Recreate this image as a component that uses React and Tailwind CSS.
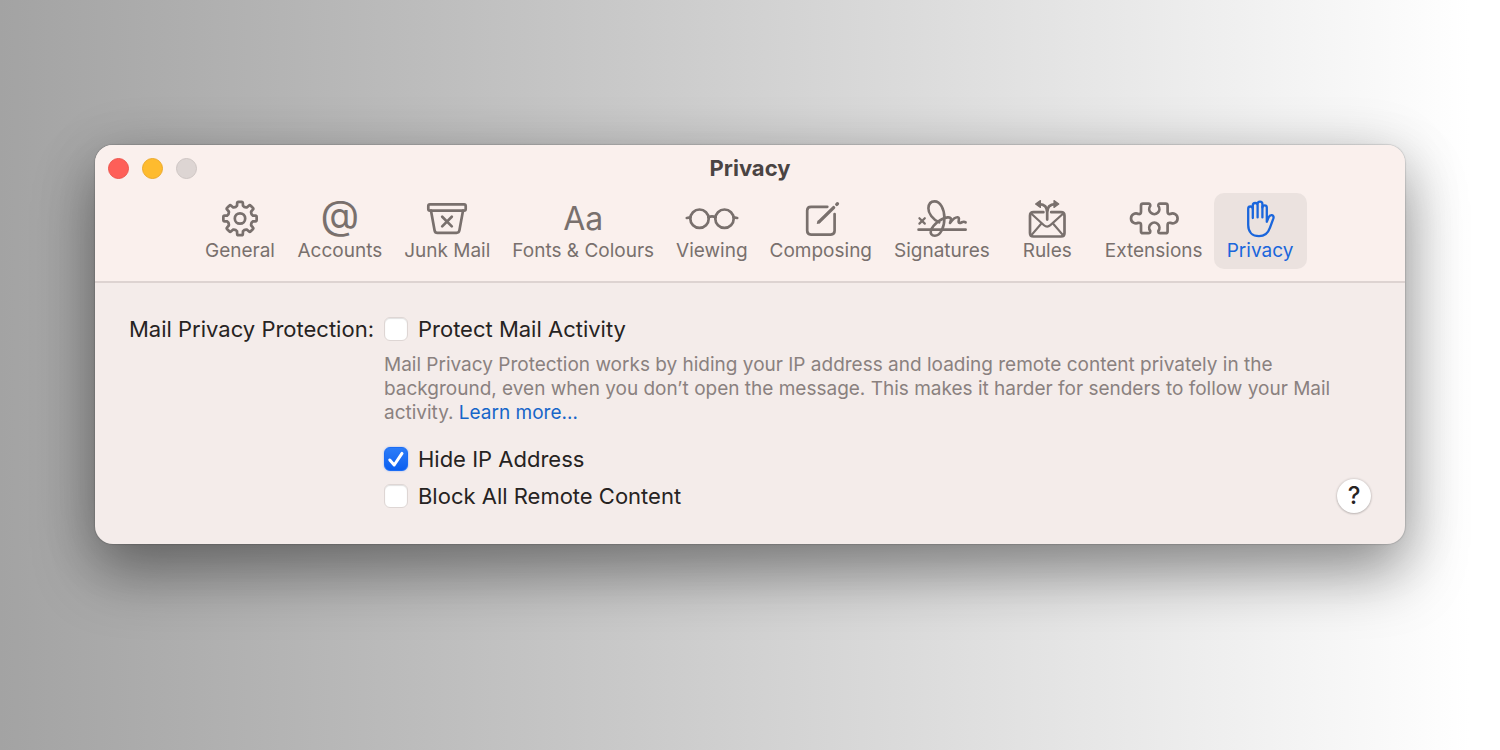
import React, { useState } from 'react';
import { clsx } from 'clsx';

// Outline of a cog with eight teeth, centred on (cx, cy)
const gearPath = (cx, cy) => {
    const point = (radius, degrees) => {
        const angle = (degrees * Math.PI) / 180;
        return `${(cx + radius * Math.cos(angle)).toFixed(2)} ${(cy + radius * Math.sin(angle)).toFixed(2)}`;
    };
    const teeth = [0, 45, 90, 135, 180, 225, 270, 315].map((a, i) => (
        `${i === 0 ? 'M' : 'L'}${point(13.2, a - 13)} L${point(15.6, a - 10.5)} Q${point(16.9, a - 9.5)} ${point(16.7, a - 5)} ` +
        `L${point(16.7, a + 5)} Q${point(16.9, a + 9.5)} ${point(15.6, a + 10.5)} L${point(13.2, a + 13)} Q${point(11.6, a + 22.5)} ${point(13.2, a + 32)}`
    ));
    return `${teeth.join(' ')} Z`;
};

const Icon = ({ children }) => (
    <svg
        viewBox="0 0 56 40"
        className="h-10 w-14"
        fill="none"
        stroke="currentColor"
        strokeWidth="2.7"
        strokeLinecap="round"
        strokeLinejoin="round"
        aria-hidden="true"
    >
        {children}
    </svg>
);

const GeneralIcon = () => (
    <Icon>
        <path d={gearPath(28, 19.5)} />
        <circle cx="28" cy="19.5" r="5.2" />
    </Icon>
);

const JunkIcon = () => (
    <Icon>
        <rect x="9.3" y="5.3" width="37.4" height="6.4" rx="1.6" />
        <path d="M12 11.7 L15.6 31.4 Q16 33.8 18.5 33.8 H37.5 Q40 33.8 40.4 31.4 L44 11.7" />
        <path d="M23.2 17.8 L32.8 27.4 M32.8 17.8 L23.2 27.4" />
    </Icon>
);

const ViewingIcon = () => (
    <Icon>
        <circle cx="15.5" cy="19.7" r="9.2" />
        <circle cx="40.5" cy="19.7" r="9.2" />
        <path d="M24.3 18.4 Q28 16.4 31.7 18.4 M2.8 19 L6.3 18.4 M53.2 19 L49.7 18.4" />
    </Icon>
);

const ComposingIcon = () => (
    <Icon>
        <path d="M34.3 7.8 H18 Q14.2 7.8 14.2 11.6 V31.8 Q14.2 35.6 18 35.6 H37.8 Q41.6 35.6 41.6 31.8 V15" />
        <path d="M26.3 22.6 L40.6 8.6" strokeWidth="3.4" />
        <path d="M24.6 24.4 L27 23.6 L25.5 22 Z" strokeWidth="1" fill="currentColor" />
        <path d="M43.8 5.4 L44.4 4.8" strokeWidth="3.4" />
    </Icon>
);

const SignaturesIcon = () => (
    <Icon>
        <path d="M4.6 30.7 H51.6" />
        <path d="M5.4 19.2 L10.8 24.6 M10.8 19.2 L5.4 24.6" strokeWidth="2.2" />
        <path d="M25.2 23.4 C18.5 20 14.2 14.2 14.4 9.4 C14.6 4.6 17.4 2.4 20.6 2.4 C26.4 2.4 30.4 10 30.4 19 C30.4 28.6 26.4 36.8 20.8 36.8 C17.6 36.8 16 34.6 17 31.4 C18.8 26 27 19 33.8 18.4 C38 18.2 37.2 20.6 36 24 C38.4 20.6 41.6 18 43.8 18.2 C46.6 18.6 43 23.8 45.6 24 C48 24 49 21.4 51.6 23.4" strokeWidth="2.6" />
    </Icon>
);

const RulesIcon = () => (
    <Icon>
        <path d="M24.4 13.2 H14.5 Q11 13.2 11 16.7 V34 Q11 37.5 14.5 37.5 H42 Q45.5 37.5 45.5 34 V16.7 Q45.5 13.2 42 13.2 H32.2" />
        <path d="M12.4 14.8 L25 26.2 Q28.2 29 31.4 26.2 L44 14.8" strokeWidth="2.2" />
        <path d="M12.2 36.4 L22 25 M44.2 36.4 L34.4 25" strokeWidth="2.2" />
        <path d="M28.2 20.6 V13.4 Q28.2 5.4 20.2 5.2 M28.2 13.4 Q28.2 5.4 36.2 5.2" />
        <path d="M16.6 5 L21.4 1.6 V8.4 Z M39.8 5 L35 1.6 V8.4 Z" strokeWidth="1.2" fill="currentColor" />
    </Icon>
);

const ExtensionsIcon = () => (
    <Icon>
        <path d="M17 4.6 H22.4 Q24.6 4.6 24.2 7 A5.1 5.1 0 1 0 32.4 7 Q32 4.6 34.2 4.6 H39.6 Q41.6 4.6 41.6 6.6 V12.8 Q41.6 15.4 44.2 15 A5 5 0 1 1 44.2 23.8 Q41.6 23.4 41.6 26 V32.2 Q41.6 34.2 39.6 34.2 H34.2 Q32 34.2 32.4 31.8 A5.1 5.1 0 1 0 24.2 31.8 Q24.6 34.2 22.4 34.2 H17 Q15 34.2 15 32.2 V26 Q15 23.4 12.4 23.8 A5 5 0 1 1 12.4 15 Q15 15.4 15 12.8 V6.6 Q15 4.6 17 4.6 Z" />
    </Icon>
);

const PrivacyIcon = () => (
    <Icon>
        <g strokeWidth="2.3">
            <path d="M20.8 19 V9.8 A2.2 2.2 0 0 0 16.2 9.8 V26 C16.2 33 20.4 37.2 27 37.2 C33 37.2 36.2 33.8 38 28.6 L41.4 19.4 C42 17.4 41 16.2 39.6 16.2 C38.2 16.2 37.2 17 36.6 18.4 L34.8 22.8 V8.6 A2.2 2.2 0 0 0 30.4 8.6" />
            <path d="M20.8 9.8 V6.4 A2.4 2.4 0 0 1 25.6 6.4 V18.4 M25.6 6.4 V5 A2.4 2.4 0 0 1 30.4 5 V18.4" />
        </g>
    </Icon>
);

const tabs = [
    { name: 'General', icon: <GeneralIcon /> },
    { name: 'Accounts', icon: <span className="h-10 text-[40px] leading-8" aria-hidden="true">@</span> },
    { name: 'Junk Mail', icon: <JunkIcon /> },
    { name: 'Fonts & Colours', icon: <span className="h-10 text-[32px] leading-10" aria-hidden="true">Aa</span> },
    { name: 'Viewing', icon: <ViewingIcon /> },
    { name: 'Composing', icon: <ComposingIcon /> },
    { name: 'Signatures', icon: <SignaturesIcon /> },
    { name: 'Rules', icon: <RulesIcon /> },
    { name: 'Extensions', icon: <ExtensionsIcon /> },
    { name: 'Privacy', icon: <PrivacyIcon /> },
];

const CheckRow = ({ id, label, checked, onChange }) => (
    <div className="flex h-6 items-center gap-[10px]">
        <span className="grid size-6 shrink-0">
            <input
                id={id}
                type="checkbox"
                checked={checked}
                onChange={onChange}
                className="col-start-1 row-start-1 size-6 appearance-none rounded-[6px] border border-[#ded6d4] bg-white shadow-[inset_0_1px_1px_rgba(0,0,0,0.12)] checked:border-[#1a6cf5] checked:bg-linear-to-b checked:from-[#2b7cf8] checked:to-[#0a5ff0] checked:shadow-[0_0_2px_rgba(40,120,255,0.5)]"
            />
            {checked && (
                <svg viewBox="0 0 24 24" className="pointer-events-none col-start-1 row-start-1 size-6" fill="none" stroke="#fff" strokeWidth="3" strokeLinecap="round" strokeLinejoin="round" aria-hidden="true">
                    <path d="M5.8 13 L10.2 18 L18 6.4" />
                </svg>
            )}
        </span>
        <label htmlFor={id}>{label}</label>
    </div>
);

const App = () => {
    const [activeTab, setActiveTab] = useState('Privacy');
    const [settings, setSettings] = useState({ protect: false, hideIp: true, blockRemote: false });

    const toggle = (key) => setSettings({ ...settings, [key]: !settings[key] });

    return (
        <div className="min-h-screen bg-linear-to-r from-[#a3a3a3] to-white to-98% px-[95px] pt-[145px] pb-16 font-['Inter',sans-serif]">
            <main className="overflow-hidden rounded-[18px] bg-[#f4ecea] shadow-[0_0_1px_1px_rgba(0,0,0,0.12),0_30px_60px_rgba(0,0,0,0.36),0_6px_60px_rgba(0,0,0,0.14)]">
                <header className="border-b-2 border-[#ddd3d1] bg-[#faf0ed] pb-3">
                    <div className="grid h-[46px] grid-cols-[1fr_auto_1fr] items-center px-[13px]">
                        <div className="flex gap-[13px]">
                            <button type="button" aria-label="Close" className="size-[21px] rounded-full border border-[#ec554d] bg-[#fe5f58]" />
                            <button type="button" aria-label="Minimise" className="size-[21px] rounded-full border border-[#eba92b] bg-[#febb2e]" />
                            <button type="button" aria-label="Zoom" disabled className="size-[21px] rounded-full border border-[#cdc5c3] bg-[#ddd5d3]" />
                        </div>
                        <h1 className="text-[22px] font-bold text-[#4a4443]">Privacy</h1>
                    </div>
                    <nav className="flex justify-center pt-[2px]">
                        {tabs.map(tab => (
                            <button
                                key={tab.name}
                                type="button"
                                onClick={() => setActiveTab(tab.name)}
                                className={clsx(
                                    'flex min-w-[93px] flex-col items-center rounded-[10px] px-[11px] py-[6px]',
                                    activeTab === tab.name ? 'bg-[#ebe2df] text-[#1a66dc]' : 'text-[#79706d]'
                                )}
                            >
                                {tab.icon}
                                <span className="text-[19px] leading-6 whitespace-nowrap">{tab.name}</span>
                            </button>
                        ))}
                    </nav>
                </header>

                <section className="flex items-end px-[34px] pt-[34px] pb-9 text-[22px] leading-6 text-[#262322]">
                    <div className="flex flex-1 items-start gap-[10px]">
                        <h2 className="whitespace-nowrap">Mail Privacy Protection:</h2>
                        <div className="flex-1">
                            <CheckRow id="protect" label="Protect Mail Activity" checked={settings.protect} onChange={() => toggle('protect')} />
                            <p className="mt-3 mb-[22px] text-[19px] text-[#8a817f]">
                                Mail Privacy Protection works by hiding your IP address and loading remote content privately in the background, even when you don’t open the message. This makes it harder for senders to follow your Mail activity.{' '}
                                <a href="#learn-more" className="text-[#1766c9]">Learn more…</a>
                            </p>
                            <div className="flex flex-col gap-[13px]">
                                <CheckRow id="hide-ip" label="Hide IP Address" checked={settings.hideIp} onChange={() => toggle('hideIp')} />
                                <CheckRow id="block-remote" label="Block All Remote Content" checked={settings.blockRemote} onChange={() => toggle('blockRemote')} />
                            </div>
                        </div>
                    </div>
                    <button type="button" aria-label="Help" className="-mb-[5px] size-[34px] rounded-full bg-white text-2xl font-medium shadow-[0_0_2px_1px_rgba(0,0,0,0.1),0_1px_2px_rgba(0,0,0,0.15)]">
                        ?
                    </button>
                </section>
            </main>
        </div>
    );
};

export default App;
